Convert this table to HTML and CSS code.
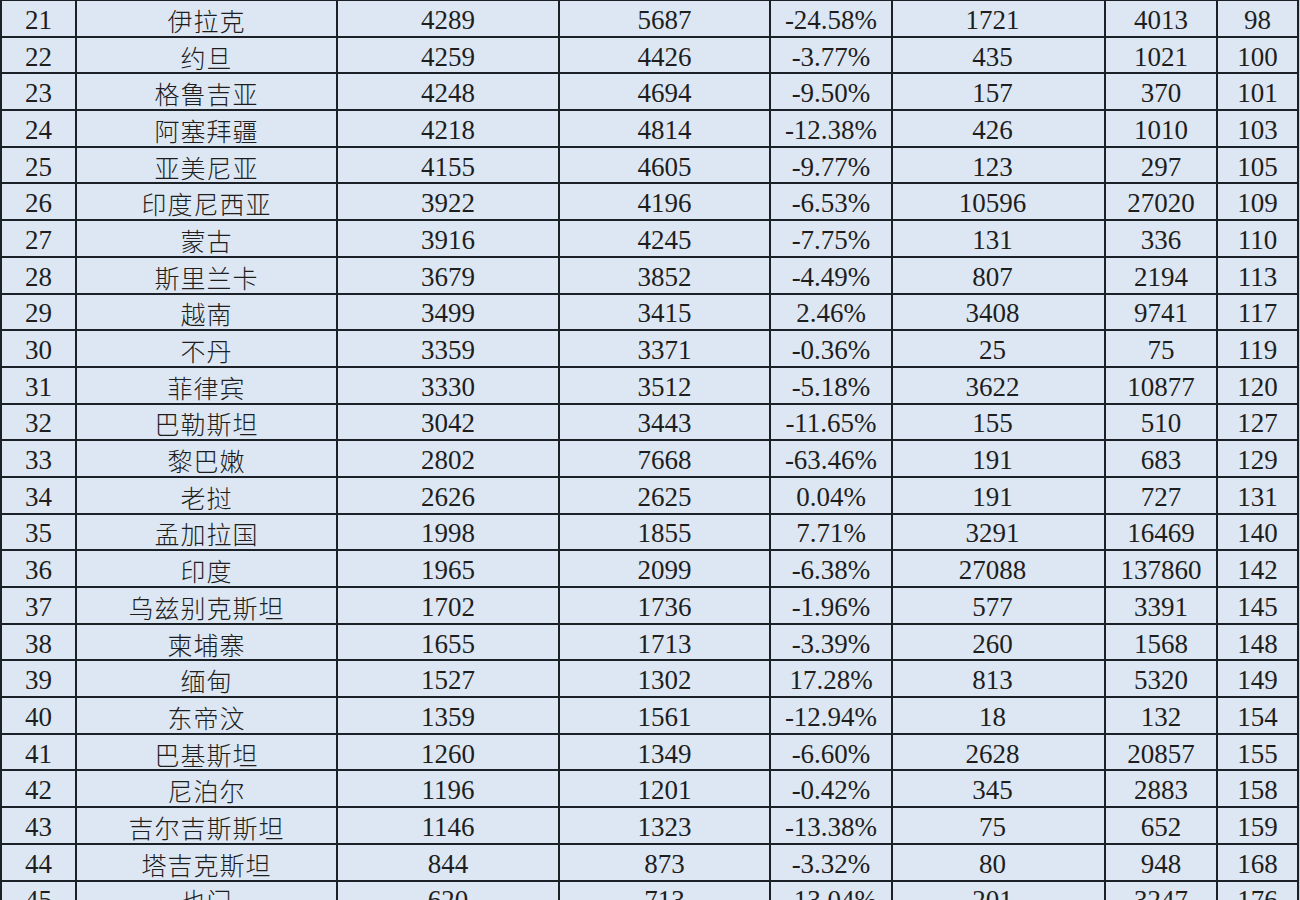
FILE: index.html
```html
<!DOCTYPE html>
<html lang="zh">
<head>
<meta charset="utf-8">
<title>Table</title>
<link rel="stylesheet" href="styles.css">
</head>
<body>
<table class="grid">
<colgroup>
<col class="c1"><col class="c2"><col class="c3"><col class="c4"><col class="c5"><col class="c6"><col class="c7"><col class="c8">
</colgroup>
<tbody>
<tr><td>21</td><td class="zh">伊拉克</td><td>4289</td><td>5687</td><td>-24.58%</td><td class="k">1721</td><td>4013</td><td>98</td></tr>
<tr><td>22</td><td class="zh">约旦</td><td>4259</td><td>4426</td><td>-3.77%</td><td class="k">435</td><td>1021</td><td>100</td></tr>
<tr><td>23</td><td class="zh">格鲁吉亚</td><td>4248</td><td>4694</td><td>-9.50%</td><td class="k">157</td><td>370</td><td>101</td></tr>
<tr><td>24</td><td class="zh">阿塞拜疆</td><td>4218</td><td>4814</td><td>-12.38%</td><td class="k">426</td><td>1010</td><td>103</td></tr>
<tr><td>25</td><td class="zh">亚美尼亚</td><td>4155</td><td>4605</td><td>-9.77%</td><td class="k">123</td><td>297</td><td>105</td></tr>
<tr><td>26</td><td class="zh">印度尼西亚</td><td>3922</td><td>4196</td><td>-6.53%</td><td class="k">10596</td><td>27020</td><td>109</td></tr>
<tr><td>27</td><td class="zh">蒙古</td><td>3916</td><td>4245</td><td>-7.75%</td><td class="k">131</td><td>336</td><td>110</td></tr>
<tr><td>28</td><td class="zh">斯里兰卡</td><td>3679</td><td>3852</td><td>-4.49%</td><td class="k">807</td><td>2194</td><td>113</td></tr>
<tr><td>29</td><td class="zh">越南</td><td>3499</td><td>3415</td><td>2.46%</td><td class="k">3408</td><td>9741</td><td>117</td></tr>
<tr><td>30</td><td class="zh">不丹</td><td>3359</td><td>3371</td><td>-0.36%</td><td class="k">25</td><td>75</td><td>119</td></tr>
<tr><td>31</td><td class="zh">菲律宾</td><td>3330</td><td>3512</td><td>-5.18%</td><td class="k">3622</td><td>10877</td><td>120</td></tr>
<tr><td>32</td><td class="zh">巴勒斯坦</td><td>3042</td><td>3443</td><td>-11.65%</td><td class="k">155</td><td>510</td><td>127</td></tr>
<tr><td>33</td><td class="zh">黎巴嫩</td><td>2802</td><td>7668</td><td>-63.46%</td><td class="k">191</td><td>683</td><td>129</td></tr>
<tr><td>34</td><td class="zh">老挝</td><td>2626</td><td>2625</td><td>0.04%</td><td class="k">191</td><td>727</td><td>131</td></tr>
<tr><td>35</td><td class="zh">孟加拉国</td><td>1998</td><td>1855</td><td>7.71%</td><td class="k">3291</td><td>16469</td><td>140</td></tr>
<tr><td>36</td><td class="zh">印度</td><td>1965</td><td>2099</td><td>-6.38%</td><td class="k">27088</td><td>137860</td><td>142</td></tr>
<tr><td>37</td><td class="zh">乌兹别克斯坦</td><td>1702</td><td>1736</td><td>-1.96%</td><td class="k">577</td><td>3391</td><td>145</td></tr>
<tr><td>38</td><td class="zh">柬埔寨</td><td>1655</td><td>1713</td><td>-3.39%</td><td class="k">260</td><td>1568</td><td>148</td></tr>
<tr><td>39</td><td class="zh">缅甸</td><td>1527</td><td>1302</td><td>17.28%</td><td class="k">813</td><td>5320</td><td>149</td></tr>
<tr><td>40</td><td class="zh">东帝汶</td><td>1359</td><td>1561</td><td>-12.94%</td><td class="k">18</td><td>132</td><td>154</td></tr>
<tr><td>41</td><td class="zh">巴基斯坦</td><td>1260</td><td>1349</td><td>-6.60%</td><td class="k">2628</td><td>20857</td><td>155</td></tr>
<tr><td>42</td><td class="zh">尼泊尔</td><td>1196</td><td>1201</td><td>-0.42%</td><td class="k">345</td><td>2883</td><td>158</td></tr>
<tr><td>43</td><td class="zh">吉尔吉斯斯坦</td><td>1146</td><td>1323</td><td>-13.38%</td><td class="k">75</td><td>652</td><td>159</td></tr>
<tr><td>44</td><td class="zh">塔吉克斯坦</td><td>844</td><td>873</td><td>-3.32%</td><td class="k">80</td><td>948</td><td>168</td></tr>
<tr><td>45</td><td class="zh">也门</td><td>620</td><td>713</td><td>-13.04%</td><td class="k">201</td><td>3247</td><td>176</td></tr>
</tbody>
</table>
</body>
</html>
```
FILE: styles.css
```css
html, body {
  margin: 0;
  padding: 0;
  background: #c9cdd2;
  overflow: hidden;
}

.grid {
  border-collapse: collapse;
  table-layout: fixed;
  width: 1297px;
  margin-top: -1px;
  background: #dde7f3;
  color: #1e1e1e;
  font-family: "Liberation Serif", "Noto Sans CJK SC", serif;
  font-size: 27px;
}

.c1 { width: 75px; }
.c2 { width: 261px; }
.c3 { width: 222px; }
.c4 { width: 211px; }
.c5 { width: 122px; }
.c6 { width: 213px; }
.c7 { width: 112px; }
.c8 { width: 81px; }

.grid td {
  border: 2px solid #1c2128;
  height: 31.7px;
  padding: 3px 0 0 0;
  text-align: center;
  vertical-align: middle;
  line-height: 30px;
  white-space: nowrap;
}

.grid td.k {
  padding-right: 12px;
}

.grid td.zh {
  font-family: "Noto Sans CJK SC", sans-serif;
  font-size: 25px;
  font-weight: 300;
  letter-spacing: 1px;
}
```
